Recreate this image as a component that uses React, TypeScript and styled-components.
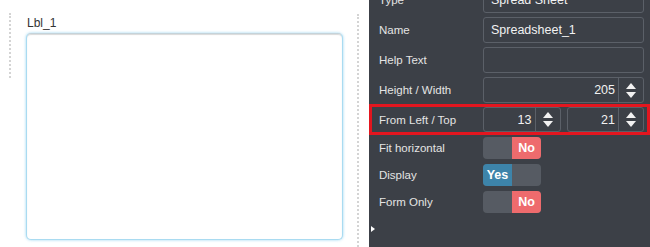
import React from "react";
import styled, { createGlobalStyle } from "styled-components";

const GlobalStyle = createGlobalStyle`
  html, body {
    margin: 0;
    padding: 0;
    width: 650px;
    height: 247px;
    overflow: hidden;
    font-family: "Liberation Sans", Arial, sans-serif;
  }
`;

interface FieldRow {
  label: string;
  value?: string;
}

const textRows: FieldRow[] = [
  { label: "Type", value: "Spread Sheet" },
  { label: "Name", value: "Spreadsheet_1" },
  { label: "Help Text", value: "" },
];

const toggles = [
  { label: "Fit horizontal", on: false },
  { label: "Display", on: true },
  { label: "Form Only", on: false },
];

const Spinner: React.FC = () => (
  <svg width="10" height="15" viewBox="0 0 10 15">
    <path d="M5 0 L10 6 L0 6 Z" fill="#f2f2f2" />
    <path d="M0 9 L10 9 L5 15 Z" fill="#f2f2f2" />
  </svg>
);

const NumberBox: React.FC<{ value: string }> = ({ value }) => (
  <NumInput>
    <NumValue>{value}</NumValue>
    <SpinBox>
      <Spinner />
    </SpinBox>
  </NumInput>
);

const Toggle: React.FC<{ on: boolean }> = ({ on }) => (
  <Track>
    <Half active={on} tone="#3d84aa">
      {on ? "Yes" : ""}
    </Half>
    <Half active={!on} tone="#ee6b6d">
      {on ? "" : "No"}
    </Half>
  </Track>
);

const App: React.FC = () => {
  return (
    <Page>
      <GlobalStyle />
      <Canvas>
        <GuideShort />
        <Field>
          <FieldLabel>Lbl_1</FieldLabel>
          <SheetBox />
        </Field>
        <GuideLong />
      </Canvas>
      <Panel>
        <List>
          {textRows.map((r) => (
            <Row key={r.label}>
              <Label>{r.label}</Label>
              <TextInput>{r.value}</TextInput>
            </Row>
          ))}
          <Row>
            <Label>Height / Width</Label>
            <NumberBox value="205" />
          </Row>
          <HighlightRow>
            <Label>From Left / Top</Label>
            <Pair>
              <NumberBox value="13" />
              <NumberBox value="21" />
            </Pair>
          </HighlightRow>
          {toggles.map((t) => (
            <ToggleRow key={t.label}>
              <Label>{t.label}</Label>
              <Toggle on={t.on} />
            </ToggleRow>
          ))}
        </List>
        <Caret />
      </Panel>
    </Page>
  );
};

export default App;

const Page = styled.div`
  display: flex;
  width: 650px;
  height: 247px;
  overflow: hidden;
`;

const Canvas = styled.div`
  width: 369px;
  flex-shrink: 0;
  background: #ffffff;
  display: flex;
  align-items: flex-start;
  padding-top: 13px;
  box-sizing: border-box;
`;

const GuideShort = styled.div`
  margin-left: 9px;
  height: 65px;
  border-left: 2px dotted #d4d4d4;
`;

const GuideLong = styled.div`
  margin-left: 14px;
  margin-top: 1px;
  align-self: stretch;
  border-left: 2px dotted #d4d4d4;
`;

const Field = styled.div`
  margin-left: 15px;
  width: 317px;
  padding-top: 3px;
`;

const FieldLabel = styled.div`
  font-size: 12px;
  line-height: 14px;
  color: #333333;
  padding-left: 1px;
  margin-bottom: 3px;
`;

const SheetBox = styled.div`
  height: 207px;
  box-sizing: border-box;
  border: 1px solid #a9dbf1;
  border-top-color: #c4d3da;
  border-radius: 5px;
  background: #ffffff;
  box-shadow: 0 0 3px rgba(110, 195, 235, 0.7), inset 0 1px 1px rgba(0, 0, 0, 0.15);
`;

const Panel = styled.div`
  flex: 1;
  background: #3c4047;
  display: flex;
  flex-direction: column;
  overflow: hidden;
`;

const List = styled.div`
  margin-top: -13px;
  display: flex;
  flex-direction: column;
  gap: 4px;
`;

const Row = styled.div`
  display: grid;
  grid-template-columns: 114px 1fr;
  align-items: center;
  height: 26px;
  padding-right: 6px;
`;

const HighlightRow = styled.div`
  display: grid;
  grid-template-columns: 111px 1fr;
  align-items: center;
  box-sizing: border-box;
  height: 31px;
  margin: -3px 0 -3px;
  border: 3px solid #e3161f;
  padding-right: 3px;

  & > div:first-child {
    padding-left: 7px;
  }
`;

const ToggleRow = styled.div`
  display: grid;
  grid-template-columns: 114px 1fr;
  align-items: center;
  height: 22px;
  margin-top: 1px;
`;

const Label = styled.div`
  padding-left: 10px;
  font-size: 11.5px;
  color: #e4e4e4;
  white-space: nowrap;
`;

const TextInput = styled.div`
  height: 100%;
  box-sizing: border-box;
  border: 1px solid #5b6068;
  border-radius: 3px;
  padding-left: 7px;
  display: flex;
  align-items: center;
  font-size: 12.5px;
  color: #f2f2f2;
`;

const Pair = styled.div`
  display: grid;
  grid-template-columns: 1fr 1fr;
  gap: 6px;
  height: 100%;
`;

const NumInput = styled.div`
  height: 100%;
  box-sizing: border-box;
  border: 1px solid #5b6068;
  border-radius: 3px;
  display: flex;
  align-items: stretch;
`;

const NumValue = styled.div`
  flex: 1;
  display: flex;
  align-items: center;
  justify-content: flex-end;
  padding-right: 3px;
  font-size: 12.5px;
  color: #f2f2f2;
`;

const SpinBox = styled.div`
  width: 24px;
  border-left: 1px solid #5b6068;
  display: flex;
  align-items: center;
  justify-content: center;
`;

const Track = styled.div`
  width: 58px;
  height: 22px;
  border-radius: 4px;
  overflow: hidden;
  background: #565b63;
  display: flex;
`;

const Half = styled.div<{ active: boolean; tone: string }>`
  flex: 1;
  background: ${({ active, tone }) => (active ? tone : "transparent")};
  color: #ffffff;
  font-weight: bold;
  font-size: 12.5px;
  display: flex;
  align-items: center;
  justify-content: center;
`;

const Caret = styled.div`
  margin-top: 13px;
  margin-left: 2px;
  width: 0;
  height: 0;
  border-top: 3px solid transparent;
  border-bottom: 3px solid transparent;
  border-left: 4px solid #ffffff;
`;
